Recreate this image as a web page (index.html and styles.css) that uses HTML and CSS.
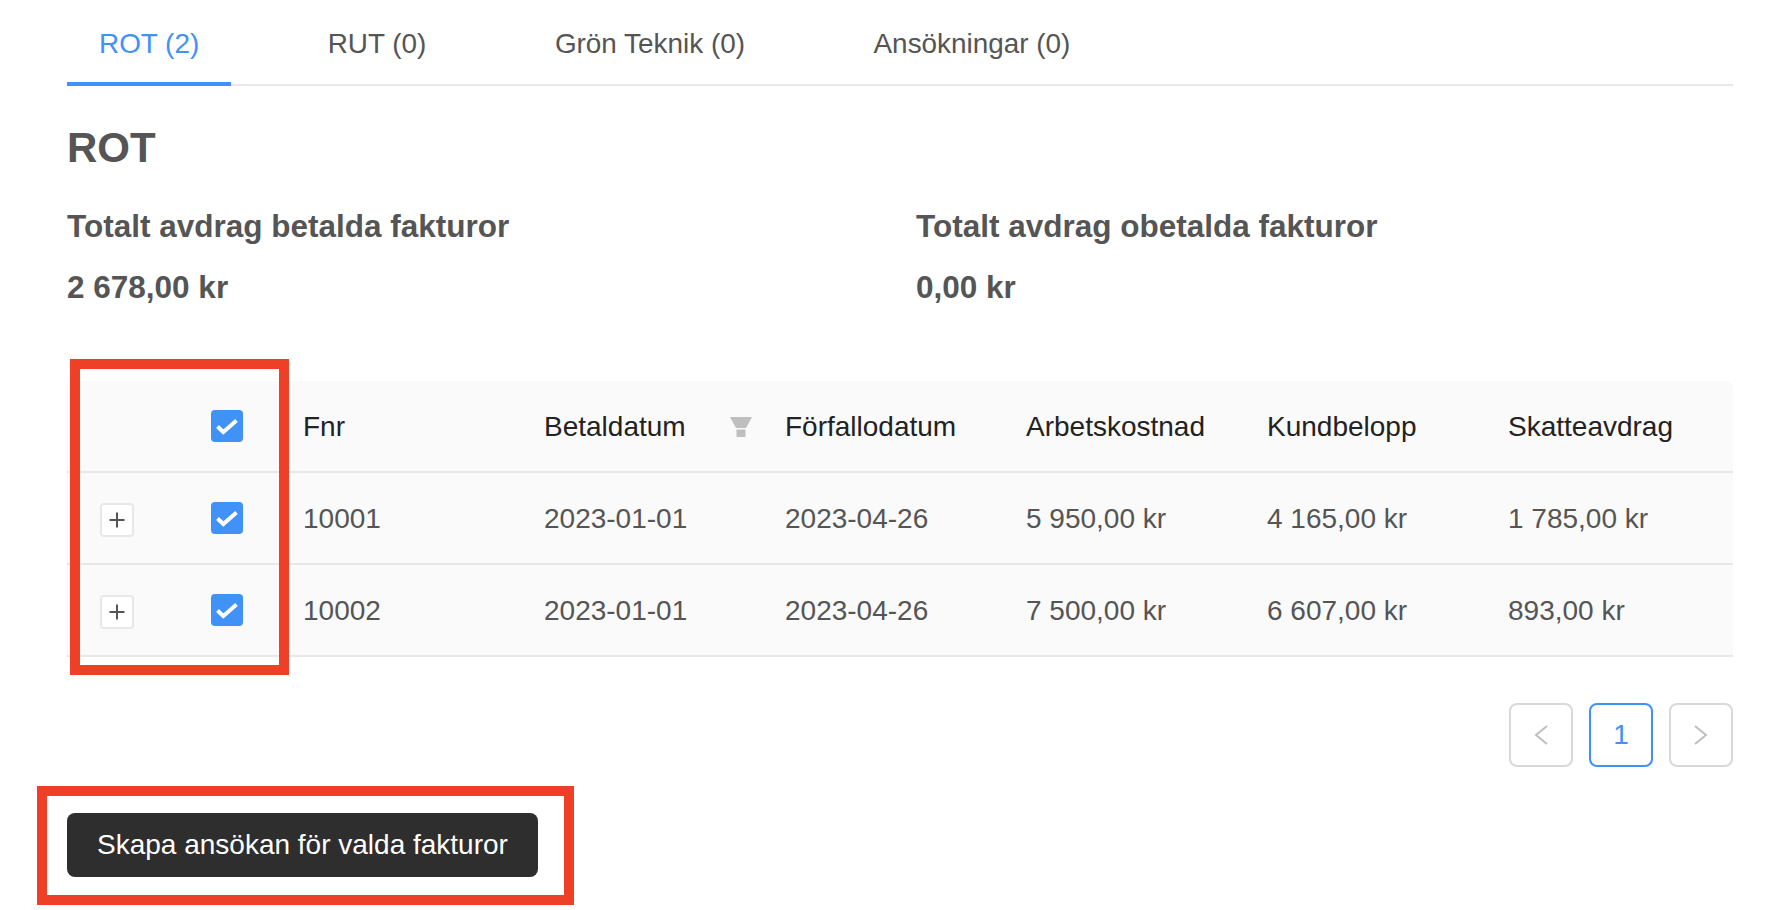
FILE: index.html
```html
<!DOCTYPE html>
<html lang="sv">
<head>
<meta charset="utf-8">
<title>ROT</title>
<link rel="stylesheet" href="styles.css">
</head>
<body>
<main class="page">
  <nav class="tabs">
    <a class="tab tab-active">ROT (2)</a>
    <a class="tab">RUT (0)</a>
    <a class="tab">Grön Teknik (0)</a>
    <a class="tab">Ansökningar (0)</a>
  </nav>
  <h1 class="title">ROT</h1>
  <section class="totals">
    <div>
      <h2 class="total-label">Totalt avdrag betalda fakturor</h2>
      <p class="total-value">2 678,00 kr</p>
    </div>
    <div>
      <h2 class="total-label">Totalt avdrag obetalda fakturor</h2>
      <p class="total-value">0,00 kr</p>
    </div>
  </section>
  <div class="table">
    <div class="row row-head">
      <div class="cell"></div>
      <div class="cell"><span class="check"><svg viewBox="0 0 32 32" width="32" height="32"><path d="M6.500 16.500l5.800 5.500L25.500 10.500" fill="none" stroke="#fff" stroke-width="4"/></svg></span></div>
      <div class="cell cell-text">Fnr</div>
      <div class="cell cell-text cell-filter">Betaldatum
        <svg class="filter" viewBox="0 0 22 20" width="22" height="20"><path d="M0 0h22l-6 11H6z" fill="#bfbfbf"/><rect x="6.500" y="12.500" width="9" height="7.500" fill="#bfbfbf"/></svg>
      </div>
      <div class="cell cell-text">Förfallodatum</div>
      <div class="cell cell-text">Arbetskostnad</div>
      <div class="cell cell-text">Kundbelopp</div>
      <div class="cell cell-text">Skatteavdrag</div>
    </div>
    <div class="row">
      <div class="cell cell-expand"><button class="expand"><svg viewBox="0 0 16 16" width="16" height="16"><path d="M8 .5v15M.5 8h15" fill="none" stroke="#555" stroke-width="2"/></svg></button></div>
      <div class="cell"><span class="check"><svg viewBox="0 0 32 32" width="32" height="32"><path d="M6.500 16.500l5.800 5.500L25.500 10.500" fill="none" stroke="#fff" stroke-width="4"/></svg></span></div>
      <div class="cell cell-text">10001</div>
      <div class="cell cell-text">2023-01-01</div>
      <div class="cell cell-text">2023-04-26</div>
      <div class="cell cell-text">5 950,00 kr</div>
      <div class="cell cell-text">4 165,00 kr</div>
      <div class="cell cell-text">1 785,00 kr</div>
    </div>
    <div class="row">
      <div class="cell cell-expand"><button class="expand"><svg viewBox="0 0 16 16" width="16" height="16"><path d="M8 .5v15M.5 8h15" fill="none" stroke="#555" stroke-width="2"/></svg></button></div>
      <div class="cell"><span class="check"><svg viewBox="0 0 32 32" width="32" height="32"><path d="M6.500 16.500l5.800 5.500L25.500 10.500" fill="none" stroke="#fff" stroke-width="4"/></svg></span></div>
      <div class="cell cell-text">10002</div>
      <div class="cell cell-text">2023-01-01</div>
      <div class="cell cell-text">2023-04-26</div>
      <div class="cell cell-text">7 500,00 kr</div>
      <div class="cell cell-text">6 607,00 kr</div>
      <div class="cell cell-text">893,00 kr</div>
    </div>
  </div>
  <div class="pagination">
    <span class="page-btn"><svg viewBox="0 0 14 20" width="14" height="20"><path d="M13 1L2 10l11 9" fill="none" stroke="#bfbfbf" stroke-width="2"/></svg></span>
    <span class="page-btn page-btn-active">1</span>
    <span class="page-btn"><svg viewBox="0 0 14 20" width="14" height="20"><path d="M1 1l11 9-11 9" fill="none" stroke="#bfbfbf" stroke-width="2"/></svg></span>
  </div>
  <button class="primary">Skapa ansökan för valda fakturor</button>
</main>
<div class="mark mark-column"></div>
<div class="mark mark-button"></div>
</body>
</html>
```

FILE: styles.css
```css
* { box-sizing: border-box; }
html, body { margin: 0; height: 100%; overflow: hidden; background: #fff; }
body {
  position: relative;
  font-family: "Liberation Sans", Arial, sans-serif;
  font-size: 28px;
  color: #555;
}
.page { padding: 0 51px 0 67px; }

.tabs { display: flex; gap: 64.500px; height: 86px; font-size: 27.900px; border-bottom: 2px solid #e8e8e8; }
.tab {
  height: 86px;
  padding: 5px 32px 0;
  line-height: 77px;
  border-bottom: 4px solid transparent;
}
.tab-active { color: #4092f7; border-bottom-color: #4092f7; }

.title { margin: 37px 0 0; font-size: 42px; line-height: 50px; font-weight: 700; }
.totals { display: grid; grid-template-columns: 1fr 1fr; gap: 32px; margin-top: 33px; }
.total-label { margin: 0; font-size: 31.500px; line-height: 40px; font-weight: 700; }
.total-value { margin: 21px 0 0; font-size: 31.500px; line-height: 40px; font-weight: 700; }

.table { margin-top: 74px; }
.row {
  display: grid;
  grid-template-columns: 144px 76px repeat(6, 1fr);
  height: 92px;
  background: #fafafa;
  border-bottom: 2px solid #e8e8e8;
}
.row-head { color: #222; border-radius: 8px 8px 0 0; }
.cell { display: flex; align-items: center; }
.cell-text { padding: 1px 16px 0; }
.cell-filter { justify-content: space-between; padding-right: 17px; }
.cell-expand { padding-left: 33px; padding-top: 4px; }
.check { display: block; width: 32px; height: 32px; border-radius: 4px; background: #4092f7; }
.check svg, .filter, .page-btn svg, .expand svg { display: block; }
.expand {
  display: flex; align-items: center; justify-content: center;
  width: 34px; height: 34px; padding: 0;
  background: #fff; border: 2px solid #e8e8e8; border-radius: 4px;
}

.pagination { display: flex; justify-content: flex-end; gap: 16px; margin-top: 46px; }
.page-btn {
  display: flex; align-items: center; justify-content: center;
  width: 64px; height: 64px;
  border: 2px solid #d9d9d9; border-radius: 8px;
}
.page-btn-active { color: #4092f7; border-color: #4092f7; }

.primary {
  display: block;
  height: 64px;
  margin-top: 46px;
  padding: 0 30px;
  font: inherit;
  color: #fff;
  background: #2e2e2e;
  border: 0;
  border-radius: 8px;
}

.mark { position: absolute; border: 10px solid #ee4026; }
.mark-column { left: 70px; top: 359px; width: 219px; height: 316px; }
.mark-button { left: 37px; top: 786px; width: 537px; height: 119px; }
```
